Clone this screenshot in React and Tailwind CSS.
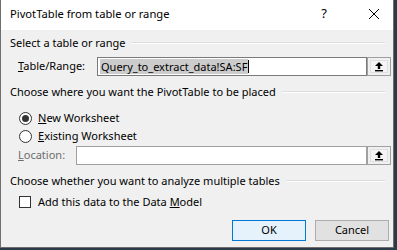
import React from "react";

const FONT = { fontFamily: '"Segoe UI", "Noto Sans", "Open Sans", sans-serif' };

function UpBtn() {
  return (
    <div className="w-[24px] h-[19px] border border-[#a0a0a0] bg-[#f0f0f0] flex items-center justify-center">
      <div className="w-[18px] h-[13px] border border-[#e0e0e0] bg-[#f4f4f4] flex items-center justify-center">
        <svg width="10" height="11" viewBox="0 0 10 11">
          <path d="M5 1 L9 5 L6.2 5 L6.2 8 L3.8 8 L3.8 5 L1 5 Z" fill="#000" />
          <rect x="1" y="9" width="8" height="1.4" fill="#000" />
        </svg>
      </div>
    </div>
  );
}

function Section({ title }) {
  return (
    <div className="flex items-center h-[14px] pl-[9px] pr-[8px] gap-[6px]">
      <span className="whitespace-nowrap text-[#000]">{title}</span>
      <div className="flex-1 h-[2px] bg-[#dcdcdc] border-b border-white"></div>
    </div>
  );
}

export default function App() {
  return (
    <div className="w-[397px] h-[250px] bg-[#2b3a46] relative overflow-hidden" style={FONT}>
      <div className="w-[394px] h-[248px] bg-[#f0f0f0] border-l border-r border-b border-[#6e6e6e] flex flex-col text-[11px] text-black">
        {/* title bar */}
        <div className="h-[30px] bg-white flex items-center pl-[9px] shrink-0">
          <span className="text-[11.2px] flex-1 pb-[2px]">PivotTable from table or range</span>
          <span className="text-[13px] w-[20px] text-center mr-[34px] pb-[2px]">?</span>
          <svg width="12" height="12" viewBox="0 0 12 12" className="mr-[13px] mb-[2px]">
            <path d="M1 1 L11 11 M11 1 L1 11" stroke="#000" strokeWidth="1" />
          </svg>
        </div>

        <div className="h-[6px]"></div>
        <Section title="Select a table or range" />
        <div className="h-[7px]"></div>
        <div className="flex items-center h-[19px] pl-[17px]">
          <span className="w-[79px]"><span className="underline">T</span>able/Range:</span>
          <div className="w-[270px] h-[19px] border border-[#7a7a7a] bg-white flex items-center pl-[2px]">
            <span className="bg-[#cccccc] leading-[15px] px-[1px]">Query_to_extract_data!SA:SF</span>
            <span className="w-[1px] h-[13px] bg-black"></span>
          </div>
          <UpBtn />
        </div>

        <div className="h-[9px]"></div>
        <Section title="Choose where you want the PivotTable to be placed" />
        <div className="h-[10px]"></div>
        <div className="flex items-center h-[18px] pl-[18px] gap-[6px]">
          <div className="w-[13px] h-[13px] rounded-full border border-[#333] bg-white flex items-center justify-center">
            <div className="w-[7px] h-[7px] rounded-full bg-[#333]"></div>
          </div>
          <span><span className="underline">N</span>ew Worksheet</span>
        </div>
        <div className="flex items-center h-[18px] pl-[18px] gap-[6px]">
          <div className="w-[13px] h-[13px] rounded-full border border-[#333] bg-white"></div>
          <span><span className="underline">E</span>xisting Worksheet</span>
        </div>
        <div className="h-[1px]"></div>
        <div className="flex items-center h-[19px] pl-[17px]">
          <span className="w-[58px] text-[#6d6d6d]"><span className="underline">L</span>ocation:</span>
          <div className="w-[291px] h-[19px] border border-[#a0a0a0] bg-white"></div>
          <UpBtn />
        </div>

        <div className="h-[9px]"></div>
        <Section title="Choose whether you want to analyze multiple tables" />
        <div className="h-[7px]"></div>
        <div className="flex items-center h-[14px] pl-[18px] gap-[7px]">
          <div className="w-[12px] h-[12px] border border-[#333] bg-white"></div>
          <span>Add this data to the Data <span className="underline">M</span>odel</span>
        </div>

        <div className="h-[11px]"></div>
        <div className="flex justify-end gap-[9px] pr-[4px]">
          <div className="w-[74px] h-[21px] border border-[#0078d7] bg-[#e5f1fb] flex items-center justify-center">OK</div>
          <div className="w-[74px] h-[21px] border border-[#adadad] bg-[#e1e1e1] flex items-center justify-center">Cancel</div>
        </div>
      </div>
    </div>
  );
}
